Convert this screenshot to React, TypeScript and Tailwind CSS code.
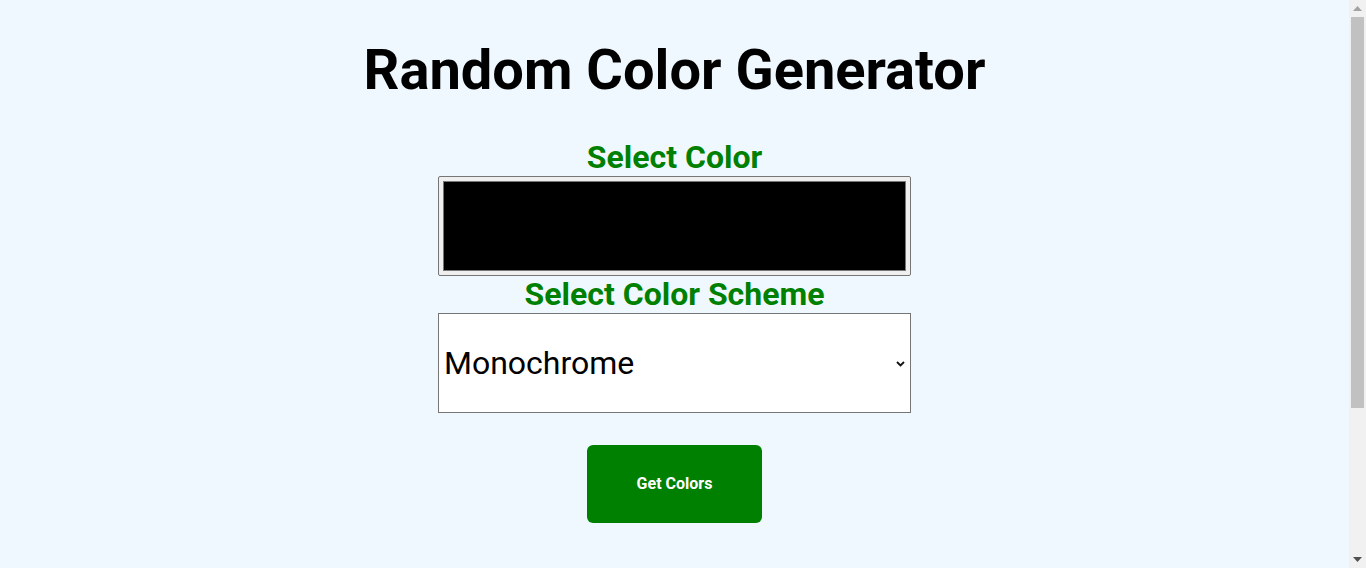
function ScrollTrack() {
  return (
    <div className="w-[17px] h-full bg-[#f1f1f1] flex flex-col items-center shrink-0">
      <div className="h-[17px] flex items-center justify-center">
        <svg width="9" height="5" viewBox="0 0 9 5">
          <path d="M0 5 L4.5 0 L9 5 Z" fill="#a3a3a3" />
        </svg>
      </div>
      <div className="w-[13px] h-[391px] bg-[#c1c1c1]"></div>
      <div className="flex-1"></div>
      <div className="h-[17px] flex items-center justify-center">
        <svg width="9" height="5" viewBox="0 0 9 5">
          <path d="M0 0 L9 0 L4.5 5 Z" fill="#505050" />
        </svg>
      </div>
    </div>
  );
}

export default function App() {
  return (
    <div className="h-[568px] flex overflow-hidden bg-[#f0f8ff] font-['Roboto',sans-serif] text-black">
      <div className="flex-1 flex flex-col items-center pt-[28px]">
        <h1 className="text-[56px] font-bold leading-[1.5] mb-[27px]">Random Color Generator</h1>

        <label className="text-[32px] font-bold text-[#008000] leading-[1.15]">Select Color</label>
        <div className="w-[473px] h-[100px] border border-[#767676] rounded-[2px] bg-[#efefef] p-[4px]">
          <div className="w-full h-full bg-black border border-[#777777]"></div>
        </div>

        <label className="text-[32px] font-bold text-[#008000] leading-[1.15]">Select Color Scheme</label>
        <div className="relative w-[473px] h-[100px] border border-[#767676] bg-white flex items-center">
          <span className="pl-[5px] text-[32px] leading-none">Monochrome</span>
          <svg className="absolute right-[5px] top-[47px]" width="9" height="6" viewBox="0 0 9 6">
            <path d="M1 1 L4.5 4.5 L8 1" fill="none" stroke="#111" strokeWidth="1.8" />
          </svg>
        </div>

        <button className="mt-[32px] w-[175px] h-[78px] rounded-[6px] bg-[#008000] text-white text-[16px] font-bold">
          Get Colors
        </button>
      </div>
      <ScrollTrack />
    </div>
  );
}
